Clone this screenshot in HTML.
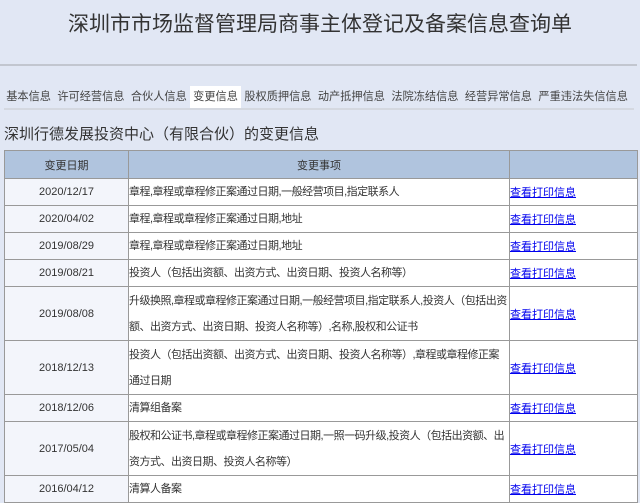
<!DOCTYPE html>
<html><head><meta charset="utf-8"><style>
body{margin:0;width:640px;height:503px;background:#e1e7f4;font-family:"Liberation Sans","Noto Sans CJK SC",sans-serif;position:relative;overflow:hidden;color:#333}
.t{position:absolute;white-space:nowrap}
#title{left:0;width:640px;text-align:center;top:8px;font-size:21px;color:#333}
#hl{position:absolute;left:0;top:64px;width:637px;height:2px;background:#c2c6cf}
#tabs{position:absolute;left:3px;top:86px;height:22px;font-size:11.2px;color:#444;white-space:nowrap}
#tabs span{display:inline-block;padding:0 3.2px;line-height:22px}
#tabs span.a{background:#fff}
#tl{position:absolute;left:4px;top:108px;width:630px;height:2px;background:#d4d8e0}
#sub{left:4px;top:123px;font-size:15px;color:#333}
table{position:absolute;left:4px;top:150px;border-collapse:collapse;font-size:11px;width:633px;table-layout:fixed}
td{border:1px solid #999;padding:0;height:26px;vertical-align:middle;overflow:hidden}
tr.h td{background:#b0c4de;height:27px;text-align:center}
td.d{background:#f3f5fb;text-align:center}
td.c{background:#fff;line-height:26px;white-space:nowrap;letter-spacing:-0.5px}
td.l{background:#fff}
td.l a{color:#00e;text-decoration:underline}
tr.m td{height:53px}
</style></head><body>
<div class="t" id="title">深圳市市场监督管理局商事主体登记及备案信息查询单</div>
<div id="hl"></div>
<div id="tabs"><span>基本信息</span><span>许可经营信息</span><span>合伙人信息</span><span class="a">变更信息</span><span>股权质押信息</span><span>动产抵押信息</span><span>法院冻结信息</span><span>经营异常信息</span><span>严重违法失信信息</span></div>
<div id="tl"></div>
<div class="t" id="sub">深圳行德发展投资中心（有限合伙）的变更信息</div>
<table>
<colgroup><col style="width:124px"><col style="width:381px"><col style="width:128px"></colgroup>
<tr class="h"><td>变更日期</td><td>变更事项</td><td></td></tr>
<tr><td class="d">2020/12/17</td><td class="c">章程,章程或章程修正案通过日期,一般经营项目,指定联系人</td><td class="l"><a>查看打印信息</a></td></tr>
<tr><td class="d">2020/04/02</td><td class="c">章程,章程或章程修正案通过日期,地址</td><td class="l"><a>查看打印信息</a></td></tr>
<tr><td class="d">2019/08/29</td><td class="c">章程,章程或章程修正案通过日期,地址</td><td class="l"><a>查看打印信息</a></td></tr>
<tr><td class="d">2019/08/21</td><td class="c">投资人（包括出资额、出资方式、出资日期、投资人名称等）</td><td class="l"><a>查看打印信息</a></td></tr>
<tr class="m"><td class="d">2019/08/08</td><td class="c">升级换照,章程或章程修正案通过日期,一般经营项目,指定联系人,投资人（包括出资<br>额、出资方式、出资日期、投资人名称等）,名称,股权和公证书</td><td class="l"><a>查看打印信息</a></td></tr>
<tr class="m"><td class="d">2018/12/13</td><td class="c">投资人（包括出资额、出资方式、出资日期、投资人名称等）,章程或章程修正案<br>通过日期</td><td class="l"><a>查看打印信息</a></td></tr>
<tr><td class="d">2018/12/06</td><td class="c">清算组备案</td><td class="l"><a>查看打印信息</a></td></tr>
<tr class="m"><td class="d">2017/05/04</td><td class="c">股权和公证书,章程或章程修正案通过日期,一照一码升级,投资人（包括出资额、出<br>资方式、出资日期、投资人名称等）</td><td class="l"><a>查看打印信息</a></td></tr>
<tr><td class="d">2016/04/12</td><td class="c">清算人备案</td><td class="l"><a>查看打印信息</a></td></tr>
</table>
</body></html>
